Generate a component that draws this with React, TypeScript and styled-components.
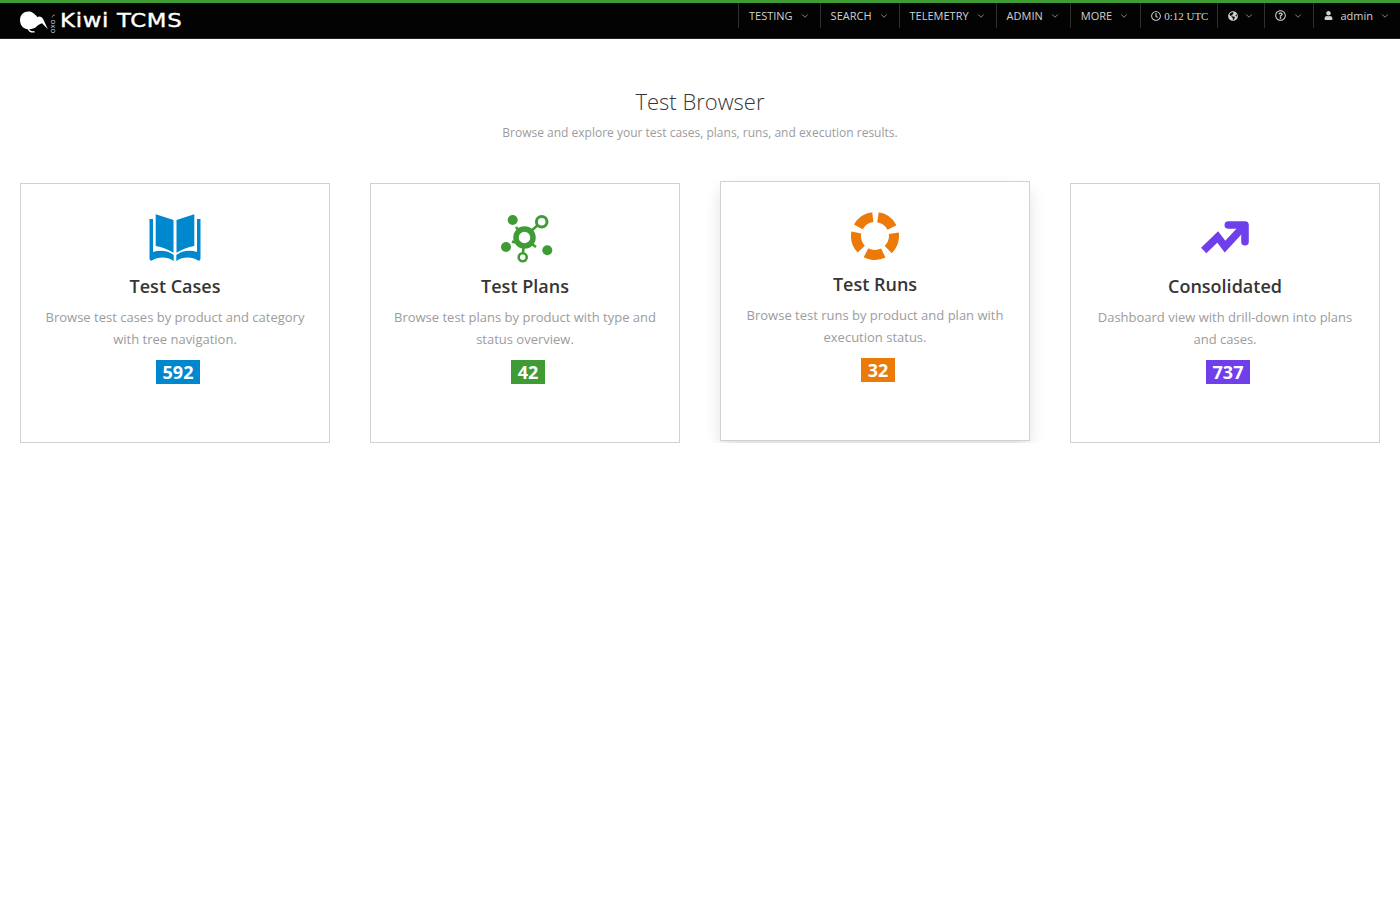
import { ReactNode } from "react";
import styled, { createGlobalStyle } from "styled-components";
import { ChevronDown } from "lucide-react";
import { FaGlobeAmericas, FaRegClock, FaRegQuestionCircle, FaUser } from "react-icons/fa";

const GlobalStyle = createGlobalStyle`
  body {
    margin: 0;
    background: #fff;
    font-family: "Open Sans", sans-serif;
  }
`;

const Header = styled.header`
  box-sizing: content-box;
  height: 35px;
  background: #030303;
  border-top: 3px solid #3f9c35;
  border-bottom: 1px solid #222;
  display: flex;
  justify-content: space-between;
  align-items: flex-start;
`;

const Brand = styled.div`
  display: flex;
  align-items: center;
  height: 35px;
  margin-left: 20px;
  color: #fff;
`;

const TinyMark = styled.span`
  writing-mode: vertical-rl;
  transform: rotate(180deg);
  font-family: "DejaVu Sans", sans-serif;
  font-size: 5.5px;
  letter-spacing: 0.8px;
  line-height: 6px;
  color: #ddd;
  margin: 3px 4px 0 1px;
`;

const BrandName = styled.span`
  font-family: "DejaVu Sans", sans-serif;
  font-size: 20px;
  letter-spacing: 0.6px;
  line-height: 37px;
  transform: scaleX(1.14);
  transform-origin: left center;
  -webkit-text-stroke: 0.4px #fff;
`;

const Nav = styled.nav`
  display: flex;
`;

const NavItem = styled.a`
  display: flex;
  align-items: center;
  height: 25px;
  padding: 0 10px;
  border-left: 1px solid #2f2f2f;
  color: #d1d1d1;
  font-size: 11px;
  white-space: nowrap;
  &:nth-child(5) {
    padding-right: 11px;
  }
`;

const NavClock = styled(NavItem)`
  padding-right: 9px;
  font-family: "Liberation Serif", serif;
  svg {
    margin-right: 3px;
  }
`;

const NavIcon = styled.span<{ $gap?: number; $size?: number }>`
  display: flex;
  font-size: ${(props) => props.$size ?? 10}px;
  margin-right: ${(props) => props.$gap ?? 0}px;
`;

const Caret = styled(ChevronDown).attrs({ size: 10, strokeWidth: 1.6 })`
  margin-left: 7px;
  color: #c4c4c4;
`;

const Main = styled.main`
  padding: 0 20px;
`;

const Intro = styled.section`
  text-align: center;
  box-sizing: content-box;
  padding-top: 47px;
  height: 97px;
`;

const Title = styled.h1`
  margin: 0;
  font-size: 22px;
  font-weight: 300;
  line-height: 30px;
  color: #363636;
`;

const Subtitle = styled.p`
  margin: 8px 0 0;
  font-size: 12px;
  line-height: 18px;
  color: #9c9c9c;
`;

const CardGrid = styled.section`
  display: grid;
  grid-template-columns: repeat(4, 310px);
  gap: 40px;
`;

const Card = styled.article<{ $raised?: boolean }>`
  box-sizing: border-box;
  height: 260px;
  padding: 27px 20px 0;
  background: #fff;
  border: 1px solid #d1d1d1;
  text-align: center;
  transform: ${(props) => (props.$raised ? "translateY(-2px)" : "none")};
  box-shadow: ${(props) => (props.$raised ? "0 8px 16px -2px rgba(0, 0, 0, 0.15)" : "none")};
`;

const IconBox = styled.div`
  display: flex;
  justify-content: center;
  height: 52px;
`;

const CardTitle = styled.h2`
  margin: 10px 0 0;
  font-size: 18px;
  font-weight: 600;
  line-height: 26px;
  color: #363636;
`;

const CardText = styled.p`
  margin: 7px 0 0;
  font-size: 13px;
  line-height: 22px;
  color: #9c9c9c;
`;

const Count = styled.span<{ $color: string }>`
  display: inline-block;
  margin: 10px 0 0 6px;
  padding: 0 7px;
  background: ${(props) => props.$color};
  color: #fff;
  font-size: 18px;
  font-weight: 700;
  line-height: 24px;
`;

function KiwiBird() {
  return (
    <svg width="29" height="22" viewBox="0 0 27 20.5" style={{ marginTop: 3 }}>
      <path
        d="M0 8.5C0 3.5 3.5 0.5 8 0.5C11.5 0.5 14 3 16 5.5C18 4.5 20.5 5 21.5 7.5L26 17L20.5 11.5C19 12 17 13 15.5 14.5C13 17 8 17.5 5 16.5C2 15.5 0 12.5 0 8.5Z"
        fill="#fff"
      />
      <path d="M8 15.5C7.5 18.5 10 19.8 13.5 19.3" fill="none" stroke="#fff" strokeWidth="1.3" />
    </svg>
  );
}

function BookIcon({ color }: { color: string }) {
  const half = (
    <g fill={color}>
      <path d="M10.7 3.3L28.5 9V41.7C23 38.5 17 36 10.7 35Z" />
      <path d="M4.5 8H8V41C15 38.5 24 40 28.7 44V50C22 45 12 46 7 49.5C5.5 50 4.5 49 4.5 47Z" />
    </g>
  );
  return (
    <svg width="60" height="52" viewBox="0 0 60 52">
      {half}
      <g transform="translate(60 0) scale(-1 1)">{half}</g>
    </svg>
  );
}

function PlansIcon({ color }: { color: string }) {
  return (
    <svg width="60" height="52" viewBox="0 0 60 52">
      <g fill="none" stroke={color}>
        <circle cx="29.5" cy="26.5" r="8.5" strokeWidth="5.5" />
        <circle cx="46.7" cy="10.7" r="5.3" strokeWidth="3" />
        <circle cx="27.7" cy="46.3" r="4" strokeWidth="2.6" />
        <path d="M36 20L43 14M28.5 36L28 42M21 16L23 18.5M17 30.5L20 31.5M37 33L41 36" strokeWidth="2.6" />
      </g>
      <g fill={color}>
        <circle cx="17.7" cy="9" r="5" />
        <circle cx="11" cy="36" r="5" />
        <circle cx="52.3" cy="39.3" r="5" />
      </g>
    </svg>
  );
}

function RunsIcon({ color }: { color: string }) {
  return (
    <svg width="60" height="52" viewBox="0 0 60 52">
      <circle
        cx="30"
        cy="27"
        r="19"
        fill="none"
        stroke={color}
        strokeWidth="10"
        strokeDasharray="17.88 6"
        transform="rotate(-81 30 27)"
      />
    </svg>
  );
}

function TrendIcon({ color }: { color: string }) {
  return (
    <svg width="60" height="52" viewBox="0 0 60 52">
      <path d="M8.7 39.5L22.7 26L30 35.5L50 14" fill="none" stroke={color} strokeWidth="7.6" />
      <path d="M33.3 14H50V30.7" fill="none" stroke={color} strokeWidth="7.6" strokeLinecap="round" strokeLinejoin="round" />
    </svg>
  );
}

const BLUE = "#0088ce";
const GREEN = "#3f9c35";
const ORANGE = "#ec7a08";
const PURPLE = "#703fec";

const cards: { title: string; text: string; count: number; color: string; icon: ReactNode; raised?: boolean }[] = [
  {
    title: "Test Cases",
    text: "Browse test cases by product and category with tree navigation.",
    count: 592,
    color: BLUE,
    icon: <BookIcon color={BLUE} />,
  },
  {
    title: "Test Plans",
    text: "Browse test plans by product with type and status overview.",
    count: 42,
    color: GREEN,
    icon: <PlansIcon color={GREEN} />,
  },
  {
    title: "Test Runs",
    text: "Browse test runs by product and plan with execution status.",
    count: 32,
    color: ORANGE,
    icon: <RunsIcon color={ORANGE} />,
    raised: true,
  },
  {
    title: "Consolidated",
    text: "Dashboard view with drill-down into plans and cases.",
    count: 737,
    color: PURPLE,
    icon: <TrendIcon color={PURPLE} />,
  },
];

const menus = ["TESTING", "SEARCH", "TELEMETRY", "ADMIN", "MORE"];

export default function App() {
  return (
    <>
      <GlobalStyle />
      <Header>
        <Brand>
          <KiwiBird />
          <TinyMark>OXO✓</TinyMark>
          <BrandName>Kiwi TCMS</BrandName>
        </Brand>
        <Nav>
          {menus.map((menu) => (
            <NavItem key={menu}>
              {menu}
              <Caret />
            </NavItem>
          ))}
          <NavClock>
            <FaRegClock size={10} />
            0:12 UTC
          </NavClock>
          <NavItem>
            <NavIcon $size={10} $gap={-1}>
              <FaGlobeAmericas />
            </NavIcon>
            <Caret />
          </NavItem>
          <NavItem>
            <NavIcon $size={11}>
              <FaRegQuestionCircle />
            </NavIcon>
            <Caret />
          </NavItem>
          <NavItem>
            <NavIcon $gap={7} $size={9}>
              <FaUser />
            </NavIcon>
            admin
            <Caret />
          </NavItem>
        </Nav>
      </Header>
      <Main>
        <Intro>
          <Title>Test Browser</Title>
          <Subtitle>Browse and explore your test cases, plans, runs, and execution results.</Subtitle>
        </Intro>
        <CardGrid>
          {cards.map((card) => (
            <Card key={card.title} $raised={card.raised}>
              <IconBox>{card.icon}</IconBox>
              <CardTitle>{card.title}</CardTitle>
              <CardText>{card.text}</CardText>
              <Count $color={card.color}>{card.count}</Count>
            </Card>
          ))}
        </CardGrid>
      </Main>
    </>
  );
}
